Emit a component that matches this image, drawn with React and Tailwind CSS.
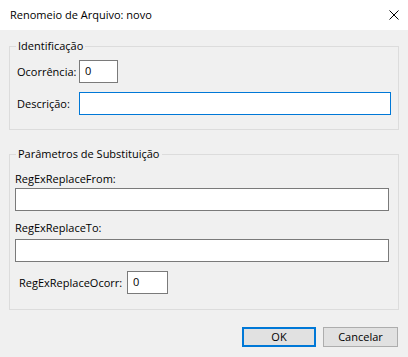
import React from "react";

/* Win10-style dialog close glyph */
function IconClose(p) {
  return (
    <svg viewBox="0 0 10 10" fill="none" {...p}>
      <path d="M0.5 0.5L9.5 9.5M9.5 0.5L0.5 9.5" stroke="currentColor" strokeWidth="1" />
    </svg>
  );
}

function Field({ value = "", focused = false, className = "" }) {
  return (
    <input
      readOnly
      value={value}
      className={`h-[23px] bg-white px-[5px] pb-[2px] text-[11px] text-black outline-none border ${
        focused ? "border-[#0078d7]" : "border-[#7a7a7a]"
      } ${className}`}
    />
  );
}

function Group({ title, className = "", children }) {
  return (
    <div className={`relative mx-[9px] border border-[#dcdcdc] ${className}`}>
      <span className="absolute -top-[9px] left-[6px] bg-[#f0f0f0] px-[2px] leading-[16px]">
        {title}
      </span>
      {children}
    </div>
  );
}

export default function App() {
  return (
    <div
      className="flex h-[357px] w-[408px] flex-col bg-[#f0f0f0] text-[11px] leading-[16px] text-black"
      style={{ fontFamily: '"Segoe UI", "Open Sans", sans-serif' }}
    >
      {/* title bar */}
      <div className="flex h-[30px] items-center justify-between bg-white pl-[10px] pr-[9px]">
        <span>Renomeio de Arquivo: novo</span>
        <IconClose className="h-[10px] w-[10px] text-black" />
      </div>

      {/* Identificação */}
      <Group title="Identificação" className="mt-[16px] h-[84px] pl-[7px] pr-[7px] pt-[13px]">
        <div className="flex items-center">
          <span className="w-[62px] shrink-0 whitespace-nowrap">Ocorrência:</span>
          <Field value="0" className="w-[39px]" />
        </div>
        <div className="mt-[9px] flex items-center">
          <span className="w-[62px] shrink-0 whitespace-nowrap">Descrição:</span>
          <Field focused className="min-w-0 flex-1" />
        </div>
      </Group>

      {/* Parâmetros de Substituição */}
      <Group
        title="Parâmetros de Substituição"
        className="mt-[24px] flex h-[156px] flex-col pl-[5px] pr-[9px] pt-[16px]"
      >
        <span>RegExReplaceFrom:</span>
        <Field className="mt-[1px] w-full" />
        <span className="mt-[9px]">RegExReplaceTo:</span>
        <Field className="mt-[3px] w-full" />
        <div className="mt-[9px] flex items-center pl-[4px]">
          <span className="w-[108px] shrink-0 whitespace-nowrap">RegExReplaceOcorr:</span>
          <Field value="0" className="w-[41px]" />
        </div>
      </Group>

      {/* actions */}
      <div className="mr-[10px] mt-[17px] flex justify-end gap-[7px]">
        <button className="h-[20px] w-[74px] border-2 border-[#0078d7] bg-[#e1e1e1] leading-[14px]">
          OK
        </button>
        <button className="h-[20px] w-[75px] border border-[#adadad] bg-[#e1e1e1] leading-[16px]">
          Cancelar
        </button>
      </div>
    </div>
  );
}
